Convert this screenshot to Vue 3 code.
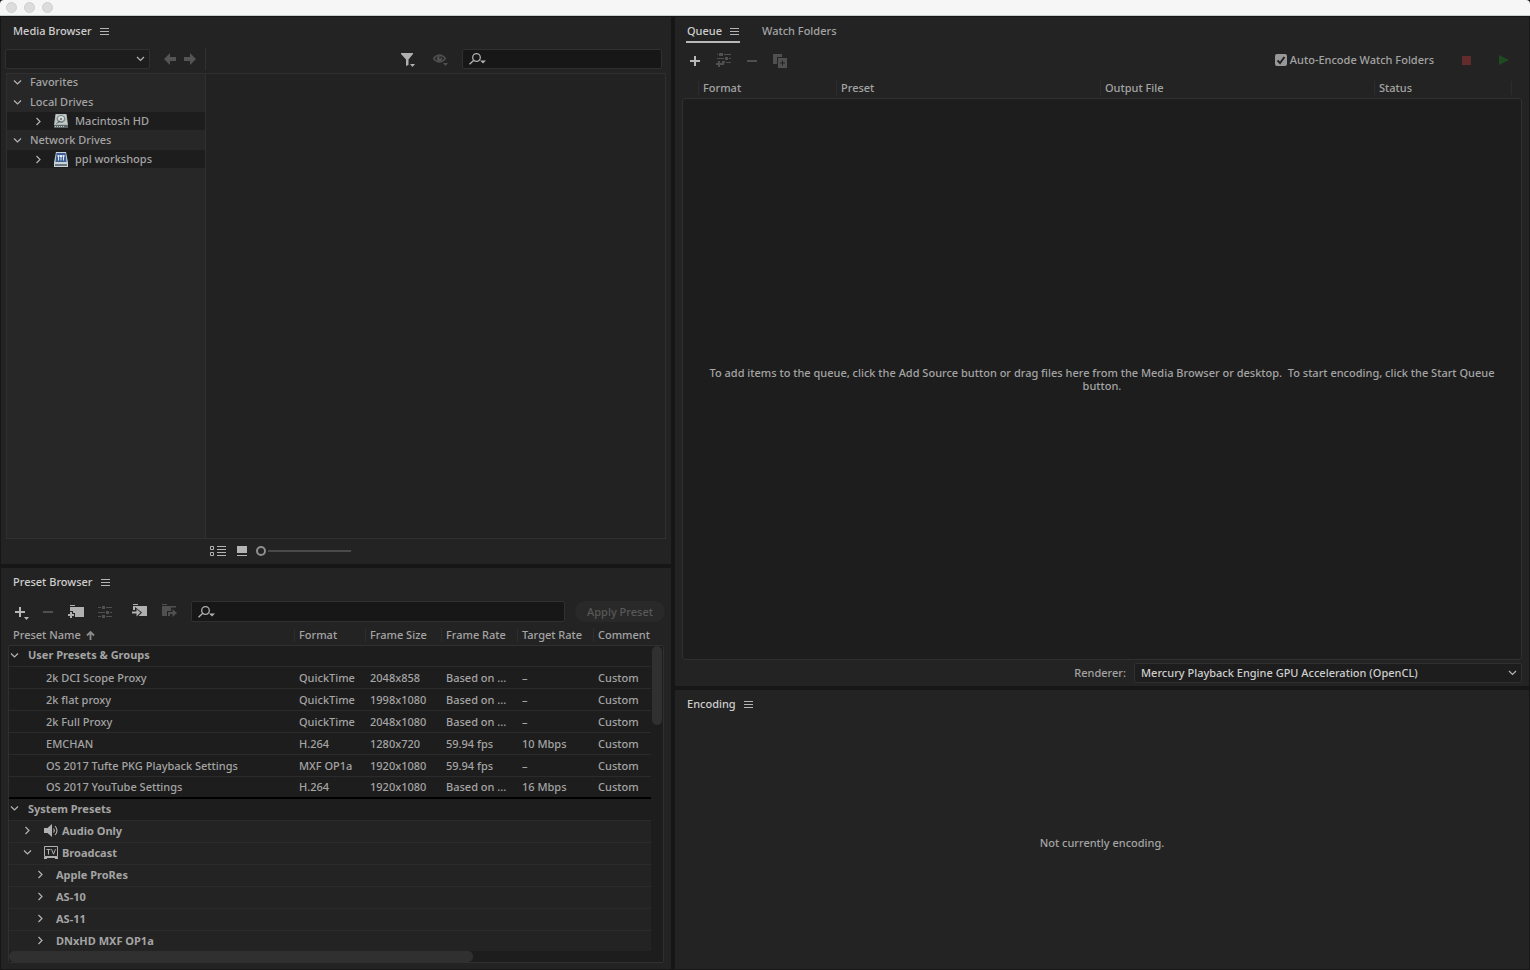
<script setup>
import { ref } from 'vue'

const autoEncode = ref(true)
const zoom = ref(0)
const renderer = ref('Mercury Playback Engine GPU Acceleration (OpenCL)')

const tree = [
  { label: 'Favorites', child: false },
  { label: 'Local Drives', child: false },
  { label: 'Macintosh HD', child: true, icon: 'disk' },
  { label: 'Network Drives', child: false },
  { label: 'ppl workshops', child: true, icon: 'network' },
]

const presetColumns = ['Format', 'Frame Size', 'Frame Rate', 'Target Rate', 'Comment']

const userPresets = [
  ['2k DCI Scope Proxy', 'QuickTime', '2048x858', 'Based on ...', '–', 'Custom'],
  ['2k flat proxy', 'QuickTime', '1998x1080', 'Based on ...', '–', 'Custom'],
  ['2k Full Proxy', 'QuickTime', '2048x1080', 'Based on ...', '–', 'Custom'],
  ['EMCHAN', 'H.264', '1280x720', '59.94 fps', '10 Mbps', 'Custom'],
  ['OS 2017 Tufte PKG Playback Settings', 'MXF OP1a', '1920x1080', '59.94 fps', '–', 'Custom'],
  ['OS 2017 YouTube Settings', 'H.264', '1920x1080', 'Based on ...', '16 Mbps', 'Custom'],
]

const systemGroups = [
  { label: 'Audio Only', icon: 'audio', open: false, level: 1 },
  { label: 'Broadcast', icon: 'tv', open: true, level: 1 },
  { label: 'Apple ProRes', open: false, level: 2 },
  { label: 'AS-10', open: false, level: 2 },
  { label: 'AS-11', open: false, level: 2 },
  { label: 'DNxHD MXF OP1a', open: false, level: 2 },
]
</script>

<template>
  <div class="window">
    <header class="titlebar">
      <button class="light" aria-label="Close"></button>
      <button class="light" aria-label="Minimize"></button>
      <button class="light" aria-label="Zoom"></button>
    </header>

    <main class="workspace">
      <div class="column">
        <section class="panel media">
          <div class="tabs">
            <h2 class="tab active">Media Browser</h2>
            <button class="menu" aria-label="Media Browser menu">
              <svg width="9" height="7"><path d="M0 .5h9M0 3.5h9M0 6.5h9" stroke="#b4b4b4" /></svg>
            </button>
          </div>

          <div class="toolbar media-tools">
            <div class="nav">
              <div class="select-box location">
                <select aria-label="Location"><option></option></select>
                <svg class="caret" width="9" height="6"><path d="M1 1l3.500 3.500L8 1" fill="none" stroke="#b4b4b4" stroke-width="1.200" /></svg>
              </div>
              <button aria-label="Back" class="back">
                <svg width="12" height="12"><path d="M0 6l6-6v4h6v4H6v4z" fill="#545454" /></svg>
              </button>
              <button aria-label="Forward">
                <svg width="12" height="12"><path d="M12 6L6 0v4H0v4h6v4z" fill="#545454" /></svg>
              </button>
            </div>
            <div class="filters">
              <button aria-label="Filter files">
                <svg width="14" height="15"><path d="M0 1h12v1L7.500 7.500V13L5 14V7.500L0 2z" fill="#b0b0b0" /><path d="M9 12h5l-2.500 3z" fill="#b0b0b0" /></svg>
              </button>
              <button aria-label="View options">
                <svg width="15" height="14"><path d="M.5 6.500Q6.500-.5 12.500 6.500 6.500 13.500.5 6.500z" fill="none" stroke="#505050" stroke-width="1.300" /><circle cx="6.500" cy="6.500" r="2.700" fill="#505050" /><circle cx="7.200" cy="5.500" r="1" fill="#232323" /><path d="M10 11h5l-2.500 3z" fill="#505050" /></svg>
              </button>
              <div class="search">
                <svg width="17" height="12"><circle cx="7.500" cy="4.500" r="3.800" fill="none" stroke="#b0b0b0" stroke-width="1.300" /><path d="M4.800 7.300L.5 11.300" stroke="#b0b0b0" stroke-width="1.400" /><path d="M11 7.500h6l-3 3z" fill="#b0b0b0" /></svg>
                <input type="search" aria-label="Search media" />
              </div>
            </div>
          </div>

          <div class="media-body">
            <ul class="tree">
              <li v-for="row in tree" :key="row.label" :class="{ child: row.child }">
                <svg v-if="row.child" class="chev" width="9" height="9"><path d="M2.500 1L6 4.500 2.500 8" fill="none" stroke="#b4b4b4" stroke-width="1.200" /></svg>
                <svg v-else class="chev" width="9" height="9"><path d="M1 2.500L4.500 6 8 2.500" fill="none" stroke="#b4b4b4" stroke-width="1.200" /></svg>
                <svg v-if="row.icon === 'disk'" class="drive" width="14" height="15">
                  <path d="M1.500 0h11L14 10.500V14H0v-3.500z" fill="#a9b3b2" />
                  <path d="M2 .5h10l1 9.500H1z" fill="#c3cbc9" />
                  <ellipse cx="7" cy="5" rx="4.500" ry="4" fill="#7d8988" />
                  <ellipse cx="7" cy="4.500" rx="3" ry="2.500" fill="#d5dcda" />
                  <circle cx="7" cy="5" r="1" fill="#58615f" />
                  <path d="M2.500 9.500L6 7" stroke="#4a5452" />
                  <path d="M0 11h14v3H0z" fill="#5c6564" />
                  <path d="M1 12.500h9" stroke="#c0c9c7" stroke-dasharray="1 1" />
                </svg>
                <svg v-if="row.icon === 'network'" class="drive" width="14" height="15">
                  <path d="M2 0h10l2 10.500V15H0v-4.500z" fill="#c9d2d8" />
                  <path d="M2.500 1h9l1 9h-11z" fill="#3c5d92" />
                  <path d="M4.500 3.500v5M7 3.500v5M9.500 3.500v5" stroke="#dce8f6" />
                  <path d="M3.500 4h7" stroke="#dce8f6" stroke-width="2" stroke-dasharray="2 .5" />
                  <path d="M1 13h12" stroke="#6b7880" stroke-width="2" />
                </svg>
                <span>{{ row.label }}</span>
              </li>
            </ul>
            <div class="thumbs"></div>
          </div>

          <div class="media-foot">
            <button aria-label="List view">
              <svg width="16" height="10"><path d="M.5.5h3v3h-3zM.5 6.500h3v3h-3z" fill="none" stroke="#b4b4b4" /><path d="M7 .5h9M7 3.500h9M7 6.500h9M7 9.500h9" stroke="#b4b4b4" /></svg>
            </button>
            <button aria-label="Thumbnail view">
              <svg width="10" height="10"><path d="M0 0h10v7H0z" fill="#b4b4b4" /><path d="M0 9.500h10" stroke="#b4b4b4" /></svg>
            </button>
            <input v-model="zoom" class="slider" type="range" min="0" max="100" aria-label="Thumbnail size" />
          </div>
        </section>

        <section class="panel presets">
          <div class="tabs">
            <h2 class="tab active">Preset Browser</h2>
            <button class="menu" aria-label="Preset Browser menu">
              <svg width="9" height="7"><path d="M0 .5h9M0 3.500h9M0 6.500h9" stroke="#b4b4b4" /></svg>
            </button>
          </div>

          <div class="toolbar preset-tools">
            <button aria-label="Create new preset">
              <svg width="15" height="16"><path d="M6 3v10M1 8h10" stroke="#b8b8b8" stroke-width="2" /><path d="M10 13h5l-2.500 3z" fill="#b8b8b8" /></svg>
            </button>
            <button aria-label="Delete preset">
              <svg width="10" height="10"><path d="M0 5h10" stroke="#505050" stroke-width="2" /></svg>
            </button>
            <button aria-label="Create new group">
              <svg width="17" height="16"><path d="M3 1.500h5" stroke="#b0b0b0" /><path d="M3 3h14v10H3z" fill="#b0b0b0" /><path d="M0 7h6v2h2v7H0z" fill="#232323" /><path d="M4 8v6M1 11h6" stroke="#b0b0b0" stroke-width="2" /></svg>
            </button>
            <button aria-label="Preset settings">
              <svg width="14" height="12"><path d="M0 1.500h3M8 1.500h6M0 6.500h7M12 6.500h2M0 10.500h3M8 10.500h6" stroke="#505050" /><path d="M4 0h3v3H4zM8 5h3v3H8zM4 9h3v3H4z" fill="#505050" /></svg>
            </button>
            <button class="transfer" aria-label="Import presets">
              <svg width="15" height="16"><path d="M1 .5h5" stroke="#b0b0b0" /><path d="M1 2h14v10H1z" fill="#b0b0b0" /><path d="M0 6h3V3l7 5.500L4.500 14H0z" fill="#232323" /><path d="M0 7.500h4.500V5L8.500 8.500l-4 4V9.500H0z" fill="#b0b0b0" /></svg>
            </button>
            <button aria-label="Export presets">
              <svg width="16" height="16"><path d="M1 .5h5" stroke="#505050" /><path d="M1 2h14v10H1z" fill="#505050" /><path d="M6 14V7h4V3.500h6V14z" fill="#232323" /><path d="M7 12V8h4.500V5L16 9l-4.500 4v-3H9v2z" fill="#505050" /></svg>
            </button>
            <div class="search">
              <svg width="17" height="12"><circle cx="7.500" cy="4.500" r="3.800" fill="none" stroke="#b0b0b0" stroke-width="1.300" /><path d="M4.800 7.300L.5 11.300" stroke="#b0b0b0" stroke-width="1.400" /><path d="M11 7.500h6l-3 3z" fill="#b0b0b0" /></svg>
              <input type="search" aria-label="Search presets" />
            </div>
            <button class="apply">Apply Preset</button>
          </div>

          <div class="preset-list">
            <table>
              <thead>
                <tr>
                  <th class="name">
                    Preset Name
                    <svg width="9" height="9"><path d="M4.500 9V1M1 4.500L4.500 1 8 4.500" fill="none" stroke="#8c8c8c" stroke-width="1.800" /></svg>
                  </th>
                  <th v-for="c in presetColumns" :key="c" class="sep">{{ c }}</th>
                </tr>
              </thead>
              <tbody>
                <tr class="group first">
                  <th colspan="6" scope="rowgroup" class="level0">
                    <svg width="9" height="9"><path d="M1 2.500L4.500 6 8 2.500" fill="none" stroke="#b4b4b4" stroke-width="1.200" /></svg>
                    <span>User Presets &amp; Groups</span>
                  </th>
                </tr>
                <tr v-for="p in userPresets" :key="p[0]" class="preset">
                  <td v-for="(v, i) in p" :key="i">{{ v }}</td>
                </tr>
                <tr class="group">
                  <th colspan="6" scope="rowgroup" class="level0">
                    <svg width="9" height="9"><path d="M1 2.500L4.500 6 8 2.500" fill="none" stroke="#b4b4b4" stroke-width="1.200" /></svg>
                    <span>System Presets</span>
                  </th>
                </tr>
                <tr v-for="g in systemGroups" :key="g.label" class="group system">
                  <th colspan="6" scope="rowgroup" :class="'level' + g.level">
                    <svg v-if="g.open" width="9" height="9"><path d="M1 2.500L4.500 6 8 2.500" fill="none" stroke="#b4b4b4" stroke-width="1.200" /></svg>
                    <svg v-else width="9" height="9"><path d="M2.500 1L6 4.500 2.500 8" fill="none" stroke="#b4b4b4" stroke-width="1.200" /></svg>
                    <svg v-if="g.icon === 'audio'" class="kind" width="14" height="13"><path d="M0 4h3.500L8 0v13L3.500 9H0z" fill="#b0b0b0" /><path d="M9.500 4.500q1.500 2 0 4M11 2q4 4.500 0 9" fill="none" stroke="#b0b0b0" stroke-width="1.100" /></svg>
                    <svg v-if="g.icon === 'tv'" class="kind" width="14" height="13"><path d="M.5.5h13v10H.5z" fill="none" stroke="#b0b0b0" /><path d="M0 11h14v2h-3v-1H3v1H0z" fill="#b0b0b0" /><path d="M2.500 3.500h4M4.500 3.500v5M7.500 3.200l2 5 2-5" fill="none" stroke="#b0b0b0" /></svg>
                    <span>{{ g.label }}</span>
                  </th>
                </tr>
              </tbody>
            </table>
            <div class="vtrack"><div class="vthumb"></div></div>
            <div class="htrack"><div class="hthumb"></div></div>
          </div>
        </section>
      </div>

      <div class="column">
        <section class="panel queue">
          <div class="tabs">
            <div class="tab-current">
              <h2 class="tab active">Queue</h2>
              <button class="menu" aria-label="Queue menu">
                <svg width="9" height="7"><path d="M0 .5h9M0 3.500h9M0 6.500h9" stroke="#b4b4b4" /></svg>
              </button>
            </div>
            <button class="tab">Watch Folders</button>
          </div>

          <div class="toolbar queue-tools">
            <div class="queue-actions">
              <button aria-label="Add source">
                <svg width="10" height="10"><path d="M5 0v10M0 5h10" stroke="#b8b8b8" stroke-width="2" /></svg>
              </button>
              <button aria-label="Add output">
                <svg width="15" height="15"><path d="M1 1.500h1M8 1.500h7M1 5.500h7M13 5.500h2M10 9.500h5" stroke="#505050" /><path d="M3 0h4v3H3zM9 4h3v3H9zM6 8h3v2H8v2H6z" fill="#505050" /><path d="M3 8v6M0 11h6" stroke="#505050" stroke-width="2" /></svg>
              </button>
              <button aria-label="Remove">
                <svg width="10" height="10"><path d="M0 5h10" stroke="#505050" stroke-width="2" /></svg>
              </button>
              <button aria-label="Duplicate">
                <svg width="14" height="14"><path d="M0 0h9v3H4v7H0z" fill="#505050" /><path d="M5 4h9v10H5z" fill="#505050" /><path d="M9.500 6.500v5M7 9h5" stroke="#232323" /></svg>
              </button>
            </div>
            <div class="queue-run">
              <label class="check">
                <input v-model="autoEncode" type="checkbox" />
                <svg width="12" height="12"><path d="M2.500 6.500L5 9l4.500-6" fill="none" stroke="#232323" stroke-width="2" /></svg>
                <span>Auto-Encode Watch Folders</span>
              </label>
              <button aria-label="Stop queue">
                <svg width="9" height="9"><path d="M0 0h9v9H0z" fill="#632c2c" /></svg>
              </button>
              <button aria-label="Start queue">
                <svg width="10" height="10"><path d="M0 0l10 5-10 5z" fill="#1f4a20" /></svg>
              </button>
            </div>
          </div>

          <table class="jobs">
            <thead>
              <tr>
                <td></td>
                <th class="sep">Format</th>
                <th class="sep">Preset</th>
                <th class="sep">Output File</th>
                <th class="sep">Status</th>
                <td class="sep"></td>
              </tr>
            </thead>
            <tbody>
              <tr>
                <td colspan="6">To add items to the queue, click the Add Source button or drag files here from the Media Browser or desktop.&nbsp; To start encoding, click the Start Queue button.</td>
              </tr>
            </tbody>
          </table>

          <div class="renderer">
            <label for="renderer">Renderer:</label>
            <div class="select-box engine">
              <select id="renderer" v-model="renderer">
                <option>Mercury Playback Engine GPU Acceleration (OpenCL)</option>
              </select>
              <svg class="caret" width="9" height="6"><path d="M1 1l3.500 3.500L8 1" fill="none" stroke="#b4b4b4" stroke-width="1.200" /></svg>
            </div>
          </div>
        </section>

        <section class="panel encoding">
          <div class="tabs">
            <h2 class="tab active">Encoding</h2>
            <button class="menu" aria-label="Encoding menu">
              <svg width="9" height="7"><path d="M0 .5h9M0 3.500h9M0 6.500h9" stroke="#b4b4b4" /></svg>
            </button>
          </div>
          <p class="idle">Not currently encoding.</p>
        </section>
      </div>
    </main>
  </div>
</template>

<style>
body {
  background: #161616;
}
</style>

<style scoped>
.window {
  display: flex;
  flex-direction: column;
  min-height: 100vh;
  background: #161616;
  color: #a4a4a4;
  font: 500 11px/14px "Noto Sans", "Open Sans", sans-serif;
}
.window * {
  box-sizing: border-box;
}
svg {
  display: block;
  flex: none;
}
button {
  padding: 0;
  border: 0;
  background: none;
  color: inherit;
  font: inherit;
}
input,
select {
  margin: 0;
  font: inherit;
}

.titlebar {
  display: flex;
  align-items: center;
  gap: 7px;
  height: 16px;
  padding-left: 6px;
  background: #f6f6f6;
  border-bottom: 1px solid #c9d0cc;
  border-radius: 4px 4px 0 0;
}
.light {
  width: 11px;
  height: 11px;
  border: 1px solid #cfcfcf;
  border-radius: 50%;
  background: #dcdcdc;
}

.workspace {
  flex: 1;
  display: grid;
  grid-template-columns: minmax(0, 670fr) minmax(0, 854fr);
  gap: 4px;
  padding: 1px;
}
.column {
  display: flex;
  flex-direction: column;
  gap: 4px;
}
.panel {
  display: flex;
  flex-direction: column;
  background: #232323;
}
.media {
  flex: 547 0 0;
}
.presets {
  flex: 401 0 0;
}
.queue {
  flex: 669 0 0;
}
.encoding {
  flex: 279 0 0;
}

.tabs {
  display: flex;
  align-items: center;
  gap: 8px;
  height: 28px;
  padding-left: 12px;
}
.tab {
  margin: 0;
  font-size: 11px;
  font-weight: 500;
}
.active {
  color: #cecece;
}
.queue .tabs {
  gap: 22px;
  padding-left: 11px;
}
.tab-current {
  align-self: stretch;
  display: flex;
  align-items: center;
  gap: 8px;
  margin-bottom: 2px;
  padding: 4px 1px 0;
  border-bottom: 2px solid #b8b8b8;
}

.toolbar {
  display: flex;
  align-items: center;
}
.search {
  display: flex;
  align-items: center;
  height: 20px;
  padding-left: 6px;
  background: #171717;
  border: 1px solid #303030;
  border-radius: 2px;
}
.search input {
  flex: 1;
  min-width: 0;
  height: 16px;
  padding: 0 4px;
  border: 0;
  outline: 0;
  background: none;
  color: #cecece;
}
.select-box {
  position: relative;
  height: 20px;
}
.select-box select {
  width: 100%;
  height: 20px;
  padding: 0 20px 0 6px;
  appearance: none;
  background: #1d1d1d;
  border: 1px solid #303030;
  border-radius: 2px;
  color: #cecece;
}
.caret {
  position: absolute;
  top: 7px;
  right: 5px;
  pointer-events: none;
}

.media-tools {
  height: 28px;
  padding: 0 9px 0 4px;
}
.nav {
  display: flex;
  align-items: center;
  gap: 8px;
  width: 201px;
  height: 22px;
  border-right: 1px solid #303030;
}
.location {
  width: 145px;
}
.back {
  margin-left: 6px;
}
.filters {
  flex: 1;
  display: flex;
  align-items: center;
  justify-content: flex-end;
  gap: 14px;
}
.filters button:first-child {
  margin-right: 4px;
}
.filters .search {
  width: 200px;
}
.media-body {
  flex: 1;
  display: flex;
  margin: 0 5px;
  border: 1px solid #303030;
}
.tree {
  width: 198px;
  margin: 0;
  padding: 0;
  list-style: none;
  background: #272727;
}
.tree li {
  display: flex;
  align-items: center;
  height: 20px;
  padding-left: 6px;
}
.tree li:first-child {
  height: 18px;
  padding-bottom: 2px;
}
.tree .chev {
  margin-right: 8px;
}
.tree .child {
  height: 18px;
  padding-left: 27px;
  background: #1d1d1d;
}
.tree .drive {
  margin: 0 7px 0 3px;
}
.thumbs {
  flex: 1;
  border-left: 1px solid #303030;
  background: #222222;
}
.media-foot {
  display: flex;
  align-items: center;
  height: 25px;
  padding: 0 0 2px 209px;
  gap: 11px;
}
.slider {
  width: 95px;
  height: 10px;
  margin-left: -2px;
  appearance: none;
  background: linear-gradient(#4a4a4a, #4a4a4a) 12px 4px / 83px 2px no-repeat;
}
.slider::-webkit-slider-thumb {
  width: 10px;
  height: 10px;
  appearance: none;
  border: 2px solid #8f8f8f;
  border-radius: 50%;
  background: #232323;
}

.preset-tools {
  height: 31px;
  padding: 0 6px 0 13px;
  gap: 14px;
}
.transfer {
  margin-left: 6px;
}
.preset-tools .search {
  flex: 1;
  height: 21px;
}
.apply {
  width: 90px;
  height: 21px;
  margin-left: -4px;
  border-radius: 11px;
  background: #292929;
  color: #585858;
}
.preset-list {
  position: relative;
  flex: 1 1 0;
  display: flex;
  min-height: 0;
  margin: 0 7px 6px;
}
table,
thead,
tbody {
  display: block;
}
tr {
  display: grid;
}
th,
td {
  padding: 0;
  font-weight: 500;
  text-align: left;
}
.sep {
  padding-left: 4px;
  border-left: 1px solid #2d2d2d;
}
.preset-list table {
  flex: 1;
  display: flex;
  flex-direction: column;
  min-width: 0;
}
.preset-list thead tr,
.preset {
  grid-template-columns: minmax(0, 1fr) 71px 76px 76px 76px 58px;
  white-space: nowrap;
}
.preset-list thead {
  height: 18px;
  padding: 1px 13px 3px 1px;
}
.name {
  display: flex;
  align-items: center;
  gap: 5px;
  padding-left: 4px;
}
.preset-list tbody {
  flex: 1 1 0;
  min-height: 0;
  overflow: hidden;
  padding-right: 12px;
  border: 1px solid #303030;
  border-radius: 2px;
  background: #1d1d1d;
}
.preset-list tbody tr {
  height: 22px;
  align-items: center;
  border-bottom: 1px solid #2b2b2b;
}
.preset-list tbody .first {
  height: 21px;
}
.preset-list .preset:nth-child(7) {
  border-bottom: 2px solid #000000;
}
.preset td {
  padding-left: 5px;
}
.preset td:first-child {
  padding-left: 37px;
}
.system {
  background: #232323;
}
.group th {
  display: flex;
  align-items: center;
  padding-bottom: 2px;
  font-weight: 700;
}
.level0 {
  padding-left: 1px;
}
.level0 span {
  margin-left: 9px;
}
.level1 {
  padding-left: 14px;
}
.level1 .kind {
  margin: 0 4px 0 12px;
}
.level2 {
  padding-left: 27px;
}
.level2 span {
  margin-left: 11px;
}
.vtrack {
  position: absolute;
  top: 19px;
  right: 1px;
  bottom: 1px;
  width: 12px;
  padding: 0 1px;
}
.vthumb {
  width: 10px;
  height: 79px;
  border-radius: 5px;
  background: #303030;
}
.htrack {
  position: absolute;
  right: 1px;
  bottom: 1px;
  left: 1px;
  height: 11px;
  background: #1d1d1d;
}
.hthumb {
  width: 71%;
  height: 11px;
  border-radius: 5px;
  background: #303030;
}

.queue-tools {
  justify-content: space-between;
  height: 33px;
  padding: 0 20px 2px 15px;
}
.queue-actions {
  display: flex;
  align-items: center;
  gap: 16px;
}
.queue-run {
  display: flex;
  align-items: center;
  padding-bottom: 1px;
}
.queue-run button {
  margin-left: 28px;
}
.check {
  position: relative;
  display: flex;
  align-items: center;
  gap: 3px;
}
.check input {
  width: 12px;
  height: 12px;
  appearance: none;
  border-radius: 2px;
  background: #989898;
}
.check svg {
  position: absolute;
  top: 1px;
  left: 0;
}
.jobs {
  flex: 1;
  display: flex;
  flex-direction: column;
  margin: 0 7px;
}
.jobs thead {
  height: 20px;
  padding: 3px 0;
}
.jobs thead tr {
  grid-template-columns: 16px 138fr 264fr 274fr 137fr 11px;
}
.jobs tbody {
  flex: 1;
  display: grid;
  align-items: center;
  border: 1px solid #303030;
  border-radius: 3px;
  background: #1d1d1d;
}
.jobs tbody td {
  padding: 0 12px;
  line-height: 13px;
  text-align: center;
}
.renderer {
  display: flex;
  align-items: center;
  justify-content: flex-end;
  gap: 8px;
  height: 26px;
  padding-right: 7px;
}
.engine {
  flex: 0 1 388px;
}
.idle {
  flex: 1;
  display: grid;
  place-items: center;
  margin: 0;
  padding-bottom: 2px;
}
</style>
